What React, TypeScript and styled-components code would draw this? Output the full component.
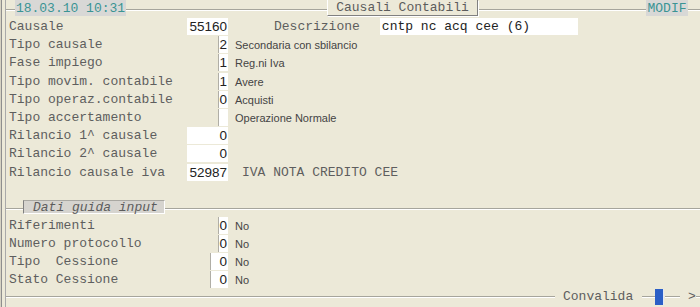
import React from "react";
import styled, { createGlobalStyle } from "styled-components";

const MONO = `"Liberation Mono", "DejaVu Sans Mono", monospace`;
const SANS = `"Liberation Sans", Arial, sans-serif`;

const Global = createGlobalStyle`
  html, body { margin: 0; padding: 0; background: #ECE9D8; }
  body { width: 700px; height: 307px; overflow: hidden; }
`;

const Screen = styled.div`
  width: 700px;
  height: 307px;
  overflow: hidden;
  background: #ece9d8;
  display: flex;
  box-sizing: border-box;
  border-left: 1px solid #d6d2c2;
`;

const Frame = styled.div`
  flex: 1;
  display: flex;
  border-left: 1px solid #8e8e8e;
  padding-left: 3px;
  min-width: 0;
`;

const Inner = styled.div`
  flex: 1;
  display: flex;
  flex-direction: column;
  border-left: 1px solid #a9a9a9;
  min-width: 0;
`;

const GroupBox = styled.div`
  margin-top: 9px;
  height: 288px;
  box-sizing: border-box;
  border-top: 1px solid #a6a59c;
  border-bottom: 1px solid #a6a59c;
  box-shadow: inset 0 1px 0 #fff, 0 1px 0 #fff;
  display: flex;
  flex-direction: column;
  flex-shrink: 0;
`;

const Header = styled.div`
  margin-top: -10px;
  height: 17px;
  display: flex;
  align-items: flex-start;
  flex-shrink: 0;
`;

const StatusBox = styled.div<{ $left: number; $width: number }>`
  margin-left: ${(p) => p.$left}px;
  width: ${(p) => p.$width}px;
  height: 16px;
  background: #d8d8d6;
  color: #3a9494;
  font: 13px/17px ${MONO};
  text-align: center;
  white-space: nowrap;
`;

const TitleBox = styled.div`
  margin-left: 201px;
  width: 151px;
  height: 16px;
  box-sizing: border-box;
  background: #ece9d8;
  border-left: 1px solid #fff;
  border-right: 1px solid #808080;
  border-bottom: 1px solid #808080;
  box-shadow: 1px 1px 0 #fff;
  color: #5c5c5c;
  font: 13px/15px ${MONO};
  text-align: center;
  white-space: nowrap;
`;

const Rows = styled.div<{ $mt?: number }>`
  margin-top: ${(p) => p.$mt ?? 0}px;
  padding-left: 3px;
  display: flex;
  flex-direction: column;
  flex-shrink: 0;
`;

const Row = styled.div<{ $h: number }>`
  height: ${(p) => p.$h}px;
  display: grid;
  grid-template-columns: 178px 41px 1fr;
  align-items: center;
`;

const Label = styled.div`
  font: 13px/18px ${MONO};
  color: #5e5e5e;
  white-space: pre;
  padding-top: 1px;
`;

const ValueCell = styled.div`
  display: flex;
  justify-content: flex-end;
`;

const ValueBox = styled.div<{ $w: number; $edge?: boolean }>`
  width: ${(p) => p.$w}px;
  height: 17px;
  box-sizing: border-box;
  background: #fff;
  border-left: 1px solid ${(p) => (p.$edge ? "#b0aea6" : "#fff")};
  font: 13.5px/18px ${SANS};
  color: #222;
  text-align: right;
  padding-right: 1px;
  overflow: hidden;
`;

const Extra = styled.div`
  display: flex;
  align-items: center;
  min-width: 0;
`;

const Desc = styled.span`
  margin-left: 7px;
  font: 11px/18px ${SANS};
  color: #444;
  white-space: nowrap;
  padding-top: 1px;
`;

const MonoDesc = styled.span<{ $ml: number }>`
  margin-left: ${(p) => p.$ml}px;
  font: 13px/18px ${MONO};
  color: #5e5e5e;
  white-space: pre;
  padding-top: 1px;
`;

const TextField = styled.div`
  margin-left: 20px;
  width: 198px;
  height: 17px;
  background: #fff;
  font: 13px/18px ${MONO};
  color: #222;
  padding-left: 2px;
  box-sizing: border-box;
  white-space: pre;
`;

const Divider = styled.div`
  margin-top: 19px;
  height: 14px;
  display: flex;
  align-items: flex-start;
  flex-shrink: 0;
`;

const Line = styled.div<{ $w?: number }>`
  ${(p) => (p.$w ? `width: ${p.$w}px;` : "flex: 1;")}
  margin-top: 8px;
  border-top: 1px solid #a6a59c;
  border-bottom: 1px solid #fff;
`;

const Legend = styled.div`
  width: 142px;
  height: 14px;
  box-sizing: border-box;
  background: #d6d4cf;
  border-top: 1px solid #a9a8a2;
  border-left: 1px solid #808080;
  border-right: 1px solid #fff;
  border-bottom: 1px solid #fff;
  padding-left: 9px;
  font: italic 13px/13px ${MONO};
  color: #5c5c5c;
  white-space: pre;
`;

const Footer = styled.div`
  margin-top: -9px;
  height: 17px;
  display: flex;
  align-items: center;
  flex-shrink: 0;
`;

const Gap = styled.div<{ $w?: number }>`
  ${(p) => (p.$w ? `width: ${p.$w}px;` : "flex: 1;")}
  height: 16px;
`;

const FooterText = styled.div<{ $w: number; $pl: number }>`
  width: ${(p) => p.$w}px;
  padding-left: ${(p) => p.$pl}px;
  box-sizing: border-box;
  background: #ece9d8;
  font: 13px/17px ${MONO};
  color: #5e5e5e;
  white-space: pre;
`;

const ButtonSlot = styled.div`
  width: 10px;
  height: 17px;
  background: #ece9d8;
  display: flex;
  align-items: center;
`;

const BlueKey = styled.div`
  width: 8px;
  height: 16px;
  background: #2b5fc6;
  border-right: 1px solid #e4e9f4;
`;

type Item = {
  label: string;
  value: string;
  w: number;
  edge?: boolean;
  desc?: string;
};

const topRows: Item[] = [
  { label: "Tipo causale", value: "2", w: 10, edge: true, desc: "Secondaria con sbilancio" },
  { label: "Fase impiego", value: "1", w: 10, edge: true, desc: "Reg.ni Iva" },
  { label: "Tipo movim. contabile", value: "1", w: 10, edge: true, desc: "Avere" },
  { label: "Tipo operaz.contabile", value: "0", w: 10, edge: true, desc: "Acquisti" },
  { label: "Tipo accertamento", value: "", w: 10, edge: true, desc: "Operazione Normale" },
  { label: "Rilancio 1^ causale", value: "0", w: 41 },
  { label: "Rilancio 2^ causale", value: "0", w: 41 },
];

const bottomRows: Item[] = [
  { label: "Riferimenti", value: "0", w: 10, edge: true, desc: "No" },
  { label: "Numero protocollo", value: "0", w: 10, edge: true, desc: "No" },
  { label: "Tipo  Cessione", value: "0", w: 18, edge: true, desc: "No" },
  { label: "Stato Cessione", value: "0", w: 18, edge: true, desc: "No" },
];

const TOP_H = 18.2;

export default function App() {
  return (
    <>
      <Global />
      <Screen>
        <Frame>
          <Inner>
            <GroupBox>
              <Header>
                <StatusBox $left={9} $width={111}>18.03.10 10:31</StatusBox>
                <TitleBox>Causali Contabili</TitleBox>
                <StatusBox $left={168} $width={42}>MODIF</StatusBox>
              </Header>
              <Rows>
                <Row $h={TOP_H}>
                  <Label>Causale</Label>
                  <ValueCell>
                    <ValueBox $w={41}>55160</ValueBox>
                  </ValueCell>
                  <Extra>
                    <MonoDesc $ml={46}>Descrizione</MonoDesc>
                    <TextField>cntp nc acq cee (6)</TextField>
                  </Extra>
                </Row>
                {topRows.map((r) => (
                  <Row $h={TOP_H} key={r.label}>
                    <Label>{r.label}</Label>
                    <ValueCell>
                      <ValueBox $w={r.w} $edge={r.edge}>{r.value}</ValueBox>
                    </ValueCell>
                    <Extra>{r.desc && <Desc>{r.desc}</Desc>}</Extra>
                  </Row>
                ))}
                <Row $h={TOP_H}>
                  <Label>Rilancio causale iva</Label>
                  <ValueCell>
                    <ValueBox $w={41}>52987</ValueBox>
                  </ValueCell>
                  <Extra>
                    <MonoDesc $ml={14}>IVA NOTA CREDITO CEE</MonoDesc>
                  </Extra>
                </Row>
              </Rows>
              <Divider>
                <Line $w={17} />
                <Legend>Dati guida input</Legend>
                <Line />
              </Divider>
              <Rows $mt={2}>
                {bottomRows.map((r) => (
                  <Row $h={18} key={r.label}>
                    <Label>{r.label}</Label>
                    <ValueCell>
                      <ValueBox $w={r.w} $edge={r.edge}>{r.value}</ValueBox>
                    </ValueCell>
                    <Extra>{r.desc && <Desc>{r.desc}</Desc>}</Extra>
                  </Row>
                ))}
              </Rows>
            </GroupBox>
            <Footer>
              <Gap />
              <FooterText $w={87} $pl={8}>Convalida</FooterText>
              <Gap $w={13} />
              <ButtonSlot>
                <BlueKey />
              </ButtonSlot>
              <Gap $w={15} />
              <FooterText $w={16} $pl={8}>&gt;</FooterText>
              <Gap $w={4} />
            </Footer>
          </Inner>
        </Frame>
      </Screen>
    </>
  );
}
